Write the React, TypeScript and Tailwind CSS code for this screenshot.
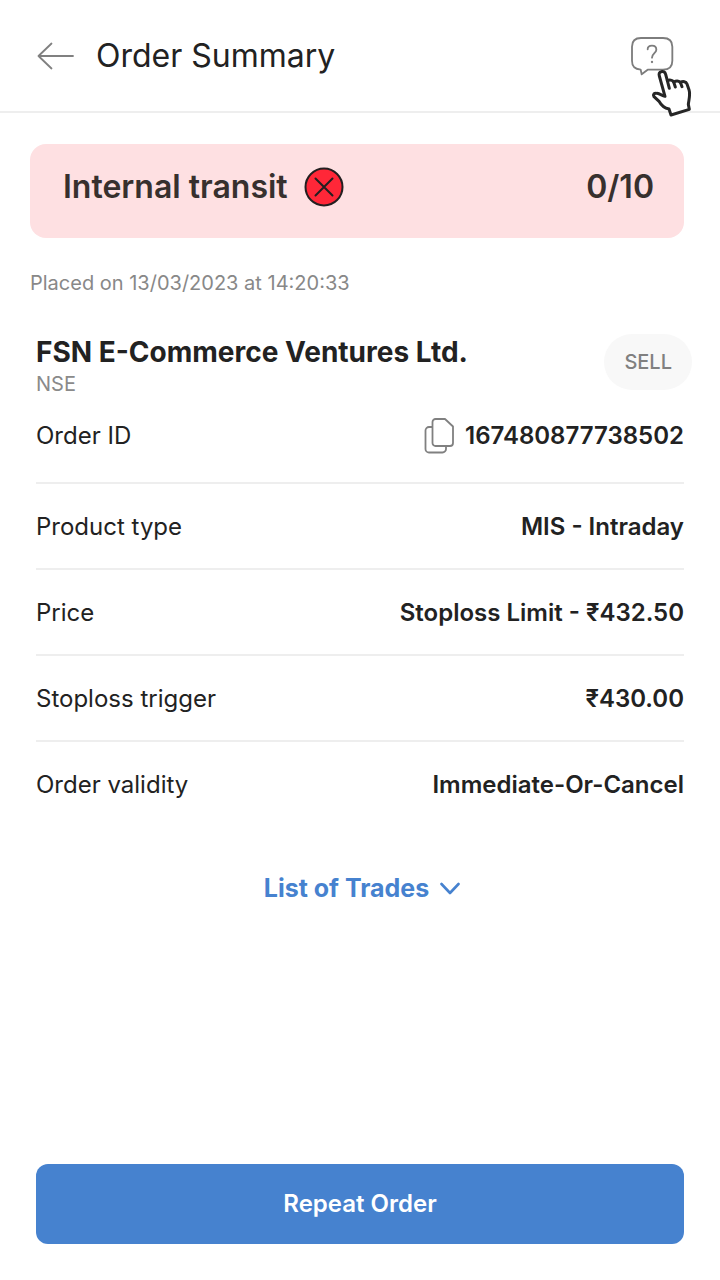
import React from 'react'

type OrderDetail = {
  label: string
  value: string
  copyable?: boolean
}

const orderDetails: OrderDetail[] = [
  { label: 'Order ID', value: '167480877738502', copyable: true },
  { label: 'Product type', value: 'MIS - Intraday' },
  { label: 'Price', value: 'Stoploss Limit - ₹432.50' },
  { label: 'Stoploss trigger', value: '₹430.00' },
  { label: 'Order validity', value: 'Immediate-Or-Cancel' },
]

const BackIcon = () => (
  <svg className="h-7 w-10" viewBox="0 0 40 28" fill="none" stroke="currentColor" strokeWidth={1.8}>
    <path strokeLinecap="round" strokeLinejoin="round" d="M37 14H2.5M15.5 1.5L2.5 14l13 12.5" />
  </svg>
)

const HelpIcon = () => (
  <svg className="h-[42px] w-12" viewBox="54 45 144 126" fill="none" stroke="currentColor">
    <path
      strokeWidth={5.5}
      strokeLinejoin="round"
      d="M92 149C72 147 66 138 66 122V80C66 62 75 54 93 54H159C178 54 187 62 187 80V122C187 141 178 149 159 149H113L95 163Z"
    />
    <path
      strokeWidth={5.5}
      strokeLinecap="round"
      d="M113 88C113 81 119 77 126 77C134 77 139 82 139 89C139 99 126 100 126 113"
    />
    <circle cx="126" cy="126" r="3.5" fill="currentColor" stroke="none" />
  </svg>
)

const HandPointer = () => (
  <svg
    className="pointer-events-none absolute top-[29px] left-5 h-[54px] w-12 text-[#262626]"
    viewBox="114 130 144 162"
    fill="none"
    stroke="currentColor"
    strokeWidth={9}
    strokeLinejoin="round"
    strokeLinecap="round"
  >
    <path
      fill="white"
      d="M165 227L148 166C146 159 148 154 154 153C160 151 165 154 167 161L172 180C178 177 187 178 191 184C198 180 206 180 211 185C219 181 228 182 231 190L237 207C242 224 236 238 235 251L238 266L183 283L177 265C164 262 154 254 148 243L132 228C128 221 133 216 141 218C150 219 156 225 165 227Z"
    />
    <path d="M172 180L178 203M191 184L196 199M211 185L216 198" />
  </svg>
)

const RejectedIcon = () => (
  <svg className="h-10 w-10" viewBox="0 0 40 40" fill="none" stroke="#231f20" strokeWidth={2}>
    <circle cx="20" cy="20" r="18.5" fill="#ff2738" />
    <path strokeLinecap="round" d="M11.5 11.5l17 17M28.5 11.5l-17 17" />
  </svg>
)

const CopyIcon = () => (
  <svg className="h-9 w-[30px]" viewBox="0 0 30 36" fill="none" stroke="currentColor" strokeWidth={1.8}>
    <path
      strokeLinejoin="round"
      d="M11.5 1H21L29 8.5V25a3 3 0 0 1-3 3H11.5a3 3 0 0 1-3-3V4a3 3 0 0 1 3-3Z"
    />
    <path d="M8.5 9H5a3.5 3.5 0 0 0-3.5 3.5V31A3.5 3.5 0 0 0 5 34.5h13.5A3.5 3.5 0 0 0 22 31v-3" />
  </svg>
)

const DetailRow: React.FC<{ detail: OrderDetail }> = ({ detail }) => (
  <div className="flex items-center justify-between border-b-2 border-[#eeeeee] pt-[25px] pb-[23px] first:pt-5 first:pb-7 last:border-b-0">
    <dt>{detail.label}</dt>
    <dd className="flex items-center gap-[11px] font-semibold">
      {detail.copyable && (
        <button type="button" aria-label="Copy order ID" className="text-[#808080]">
          <CopyIcon />
        </button>
      )}
      {detail.value}
    </dd>
  </div>
)

export default function App() {
  return (
    <div className="flex min-h-screen flex-col bg-white font-['Inter',sans-serif] text-[#222222]">
      <header className="flex items-center justify-between border-b-2 border-[#eeeeee] pt-8 pr-11 pb-[31px] pl-9">
        <div className="flex items-center gap-5">
          <button type="button" aria-label="Back" className="text-[#808080]">
            <BackIcon />
          </button>
          <h1 className="text-[32px] leading-12">Order Summary</h1>
        </div>
        <div className="relative">
          <button type="button" aria-label="Help" className="block text-[#7d7d7d]">
            <HelpIcon />
          </button>
          <HandPointer />
        </div>
      </header>

      <main className="flex flex-1 flex-col px-9 pt-[31px] pb-9">
        <section className="-ml-1.5 flex items-start justify-between rounded-2xl bg-[#fee0e2] pt-[23px] pr-[30px] pb-[31px] pl-[33px] text-[32px] leading-10 font-semibold text-[#37302e]">
          <div className="flex items-center gap-4">
            <h2>Internal transit</h2>
            <RejectedIcon />
          </div>
          <p>0/10</p>
        </section>

        <p className="-ml-1.5 mt-[31px] text-xl leading-7 text-[#888888]">Placed on 13/03/2023 at 14:20:33</p>

        <div className="mt-[37px] flex items-start justify-between">
          <div>
            <h3 className="text-[28px] leading-9 font-bold">FSN E-Commerce Ventures Ltd.</h3>
            <p className="text-xl leading-7 text-[#8a8a8a]">NSE</p>
          </div>
          <span className="-mr-2 rounded-full bg-[#f8f8f8] px-5 py-[14px] text-xl leading-7 font-medium text-[#808080]">
            SELL
          </span>
        </div>

        <dl className="text-2xl leading-9">
          {orderDetails.map((detail) => (
            <DetailRow key={detail.label} detail={detail} />
          ))}
        </dl>

        <button
          type="button"
          className="mt-11 flex items-center gap-[11px] self-center pl-1 text-[25px] leading-9 font-bold text-[#4682cf]"
        >
          List of Trades
          <svg className="h-5 w-5" viewBox="0 0 20 20" fill="none" stroke="currentColor" strokeWidth={2.6}>
            <path strokeLinecap="round" strokeLinejoin="round" d="M1.5 6l8.5 9 8.5-9" />
          </svg>
        </button>

        <button
          type="button"
          className="mt-auto w-full rounded-xl bg-[#4682cf] py-[22px] text-2xl leading-9 font-semibold text-white"
        >
          Repeat Order
        </button>
      </main>
    </div>
  )
}
